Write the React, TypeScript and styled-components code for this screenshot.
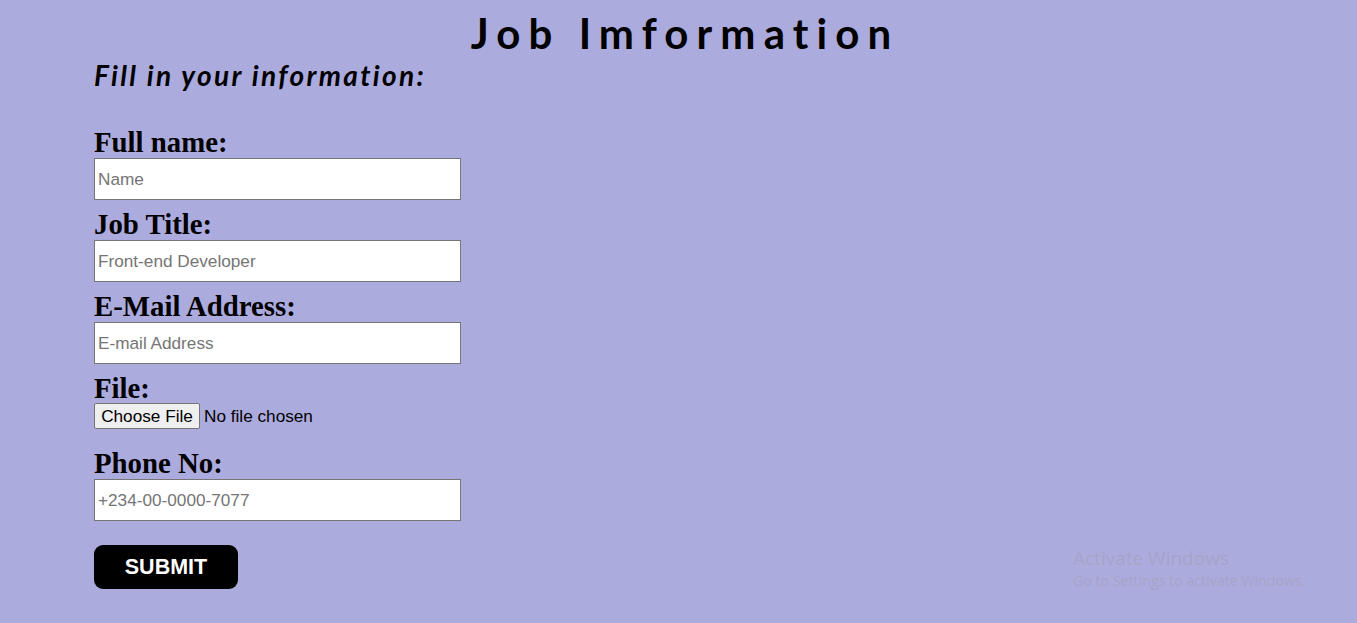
import React from "react";
import styled, { createGlobalStyle } from "styled-components";

const GlobalStyle = createGlobalStyle`
  html, body {
    margin: 0;
    padding: 0;
    background: #acabde;
  }
  body {
    font-family: "Liberation Serif", "Times New Roman", serif;
    color: #000;
  }
`;

const Page = styled.div`
  position: relative;
  width: 1357px;
  height: 623px;
  overflow: hidden;
  background: #acabde;
`;

const Title = styled.h1`
  margin: 0;
  padding: 8px 0 0 13px;
  text-align: center;
  font-family: "Lato", "Noto Sans", sans-serif;
  font-weight: 700;
  font-size: 42px;
  line-height: 50px;
  letter-spacing: 8.1px;
  color: #000;
`;

const Form = styled.form`
  display: flex;
  flex-direction: column;
  align-items: flex-start;
  padding-left: 94px;
`;

const Subtitle = styled.h2`
  margin: 0 0 35px 0;
  font-family: "Lato", "Noto Sans", sans-serif;
  font-style: italic;
  font-weight: 700;
  font-size: 28px;
  line-height: 34px;
  letter-spacing: 2.35px;
`;

const Label = styled.label`
  display: block;
  font-family: "Liberation Serif", "Times New Roman", serif;
  font-weight: bold;
  font-size: 28.8px;
  line-height: 31px;
`;

const TextInput = styled.input`
  box-sizing: border-box;
  width: 367px;
  height: 42px;
  margin: 0 0 9px 0;
  padding: 0 3px;
  border: 1px solid #767676;
  border-radius: 0;
  background: #fff;
  font-family: "Liberation Sans", Arial, sans-serif;
  font-size: 17.2px;
  color: #000;
  outline: none;
  &::placeholder {
    color: #757575;
  }
`;

const FileRow = styled.div`
  display: flex;
  align-items: center;
  gap: 4px;
  height: 26px;
  margin: -1px 0 19px 0;
  font-family: "Liberation Sans", Arial, sans-serif;
  font-size: 17.2px;
`;

const FileButton = styled.label`
  box-sizing: border-box;
  display: inline-flex;
  align-items: center;
  justify-content: center;
  width: 106px;
  height: 26px;
  border: 1px solid #767676;
  border-radius: 2px;
  background: #efefef;
  font-family: "Liberation Sans", Arial, sans-serif;
  font-size: 17.2px;
  color: #000;
  cursor: pointer;
`;

const HiddenFile = styled.input`
  display: none;
`;

const FileStatus = styled.span`
  color: #000;
`;

const SubmitButton = styled.button`
  box-sizing: border-box;
  width: 144px;
  height: 44px;
  margin-top: 15px;
  border: none;
  border-radius: 9px;
  background: #000;
  color: #fff;
  font-family: "Liberation Sans", Arial, sans-serif;
  font-weight: bold;
  font-size: 21.5px;
  cursor: pointer;
`;

const Watermark = styled.div`
  position: absolute;
  left: 1073px;
  top: 546px;
  font-family: "Open Sans", "Noto Sans", sans-serif;
  color: rgba(162, 162, 190, 0.75);
  pointer-events: none;
`;

const WatermarkTitle = styled.div`
  font-size: 19px;
  line-height: 25px;
`;

const WatermarkText = styled.div`
  font-size: 14.2px;
  line-height: 19px;
`;

export default function App() {
  return (
    <Page>
      <GlobalStyle />
      <Title>Job Imformation</Title>
      <Form onSubmit={(e) => e.preventDefault()}>
        <Subtitle>Fill in your information:</Subtitle>
        <Label htmlFor="name">Full name:</Label>
        <TextInput id="name" type="text" placeholder="Name" />
        <Label htmlFor="job">Job Title:</Label>
        <TextInput id="job" type="text" placeholder="Front-end Developer" />
        <Label htmlFor="email">E-Mail Address:</Label>
        <TextInput id="email" type="email" placeholder="E-mail Address" />
        <Label htmlFor="file">File:</Label>
        <FileRow>
          <FileButton htmlFor="file">Choose File</FileButton>
          <HiddenFile id="file" type="file" />
          <FileStatus>No file chosen</FileStatus>
        </FileRow>
        <Label htmlFor="phone">Phone No:</Label>
        <TextInput id="phone" type="tel" placeholder="+234-00-0000-7077" />
        <SubmitButton type="submit">SUBMIT</SubmitButton>
      </Form>
      <Watermark>
        <WatermarkTitle>Activate Windows</WatermarkTitle>
        <WatermarkText>Go to Settings to activate Windows.</WatermarkText>
      </Watermark>
    </Page>
  );
}
